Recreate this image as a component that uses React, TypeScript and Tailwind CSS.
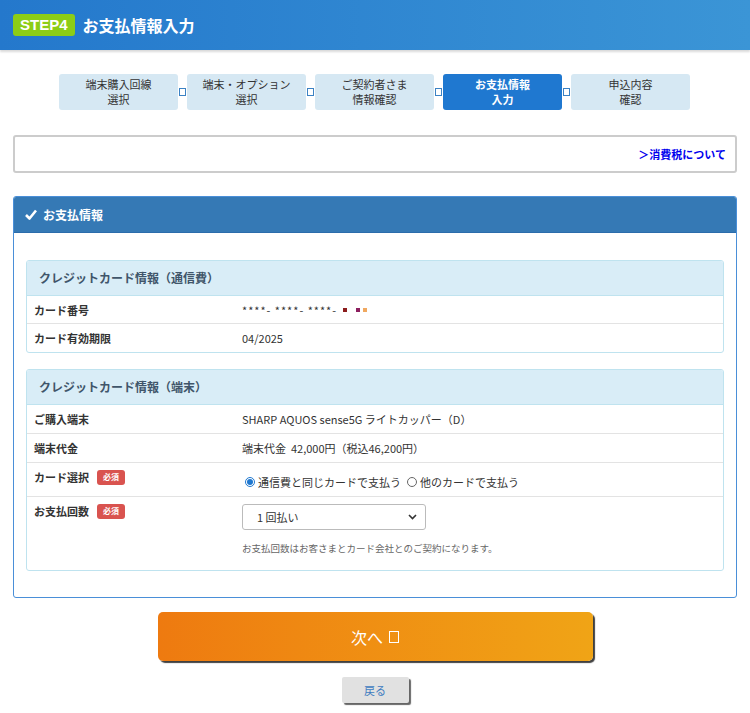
const font = { fontFamily: '"Noto Sans CJK JP", "Liberation Sans", sans-serif' };

const Tofu = ({ className = '' }: { className?: string }) => (
  <span className={`inline-block w-[7px] h-[8px] border border-[#3b82c4] ${className}`} />
);

const steps = [
  { label: ['端末購入回線', '選択'] },
  { label: ['端末・オプション', '選択'] },
  { label: ['ご契約者さま', '情報確認'] },
  { label: ['お支払情報', '入力'], active: true },
  { label: ['申込内容', '確認'] },
];

const Required = () => (
  <span className="ml-2 inline-flex items-center rounded-[3px] bg-[#d9534f] px-[6px] h-[15px] text-[8px] font-bold text-white">
    必須
  </span>
);

interface RowProps {
  label: React.ReactNode;
  children: React.ReactNode;
  h?: string;
  last?: boolean;
}

const Row = ({ label, children, h = 'h-[28px]', last }: RowProps) => (
  <div className={`flex ${h} ${last ? '' : 'border-b border-[#e3e3e3]'}`}>
    <div className="w-[215px] pl-[7px] text-[11px] font-bold text-[#333] flex items-start pt-[6px]">{label}</div>
    <div className="flex-1 text-[11px] text-[#333] pt-[6px]">{children}</div>
  </div>
);

const Section = ({ title, children }: { title: string; children: React.ReactNode }) => (
  <div className="rounded-[3px] border border-[#bfe3ef] overflow-hidden">
    <div className="h-[35px] bg-[#d9edf7] border-b border-[#bfe3ef] flex items-center pl-[12px] text-[12px] font-bold text-[#40556a]">
      {title}
    </div>
    {children}
  </div>
);

export default function App() {
  return (
    <div className="w-[750px] min-h-[713px] bg-white" style={font}>
      <div className="h-[50px] bg-gradient-to-r from-[#2478cc] to-[#3b95d6] shadow-[0_2px_2px_rgba(0,0,0,0.15)] flex items-center pl-[13px]">
        <span className="h-[22px] px-[7px] rounded-[3px] bg-[#8ccd16] text-white text-[15px] font-bold flex items-center" style={{ fontFamily: '"Liberation Sans", sans-serif' }}>
          STEP4
        </span>
        <span className="ml-[8px] text-white text-[16px] font-bold">お支払情報入力</span>
      </div>

      <div className="mt-[24px] flex items-center justify-center pr-[1px]">
        {steps.map((s, i) => (
          <div key={i} className="flex items-center">
            <div
              className={`w-[119px] h-[36px] rounded-[3px] flex flex-col items-center justify-center text-[11px] ${
                s.active ? 'bg-[#1f78d0] text-white font-bold' : 'bg-[#d6e8f3] text-[#333]'
              }`}
            >
              <span className="leading-[15px]">{s.label[0]}</span>
              <span className="leading-[15px]">{s.label[1]}</span>
            </div>
            {i < steps.length - 1 && (
              <div className="w-[9px] flex justify-center">
                <Tofu />
              </div>
            )}
          </div>
        ))}
      </div>

      <div className="mx-[13px] mt-[25px] h-[38px] rounded-[3px] border-2 border-[#cccccc] flex items-center justify-end pr-[9px]">
        <span className="text-[11px] font-bold text-[#0000ee]">＞消費税について</span>
      </div>

      <div className="mx-[13px] mt-[23px] rounded-[3px] border border-[#4a8fd8] overflow-hidden">
        <div className="h-[36px] bg-[#3579b5] border-b border-[#2b6cab] flex items-center pl-[11px] text-white text-[12px] font-bold">
          <svg width="12" height="11" viewBox="0 0 12 11" className="mr-[6px]">
            <path d="M1 6 L4.5 9.5 L11 1.5" stroke="white" strokeWidth="2.6" fill="none" strokeLinejoin="round" />
          </svg>
          お支払情報
        </div>
        <div className="px-[12px] pt-[27px] pb-[26px] flex flex-col gap-[16px]">
          <Section title="クレジットカード情報（通信費）">
            <Row label="カード番号">
              <span className="inline-flex items-center gap-[3px] tracking-[1px]">
                ****- ****- ****-
                <span className="ml-[3px] inline-block w-[4px] h-[4px] bg-[#8b1c1c]" />
                <span className="ml-[6px] inline-block w-[4px] h-[4px] bg-[#8c1f5e]" />
                <span className="inline-block w-[4px] h-[4px] bg-[#f0a860]" />
              </span>
            </Row>
            <Row label="カード有効期限" last>
              04/2025
            </Row>
          </Section>

          <Section title="クレジットカード情報（端末）">
            <Row label="ご購入端末" h="h-[29px]">
              SHARP AQUOS sense5G ライトカッパー（D）
            </Row>
            <Row label="端末代金" h="h-[29px]">
              端末代金&nbsp;&nbsp;42,000円（税込46,200円）
            </Row>
            <Row
              h="h-[34px]"
              label={
                <span className="flex items-center">
                  カード選択
                  <Required />
                </span>
              }
            >
              <div className="flex items-center mt-[5px] ml-[3px] text-[11px]">
                <span className="w-[10px] h-[10px] rounded-full border border-[#1f78d0] flex items-center justify-center mr-[3px]">
                  <span className="w-[6px] h-[6px] rounded-full bg-[#1f78d0]" />
                </span>
                通信費と同じカードで支払う
                <span className="ml-[6px] w-[10px] h-[10px] rounded-full border border-[#666] mr-[3px]" />
                他のカードで支払う
              </div>
            </Row>
            <Row
              h="h-[73px]"
              last
              label={
                <span className="flex items-center">
                  お支払回数
                  <Required />
                </span>
              }
            >
              <div className="w-[184px] h-[26px] rounded-[3px] border border-[#bbb] flex items-center justify-between pl-[14px] pr-[8px] text-[11px] text-[#333] mt-[1px]">
                <span>1 回払い</span>
                <svg width="9" height="6" viewBox="0 0 9 6">
                  <path d="M1 1 L4.5 4.5 L8 1" stroke="#333" strokeWidth="1.6" fill="none" />
                </svg>
              </div>
              <div className="mt-[11px] text-[9.5px] text-[#666]">お支払回数はお客さまとカード会社とのご契約になります。</div>
            </Row>
          </Section>
        </div>
      </div>

      <div className="flex justify-center mt-[14px]">
        <button className="w-[435px] h-[49px] rounded-[5px] bg-gradient-to-r from-[#ee7a10] to-[#f0a416] shadow-[2px_2px_1px_rgba(0,0,0,0.75)] text-white text-[16px] flex items-center justify-center gap-[6px]">
          次へ
          <span className="inline-block w-[10px] h-[12px] border border-white" />
        </button>
      </div>

      <div className="flex justify-center mt-[16px]">
        <button className="w-[67px] h-[26px] rounded-[2px] bg-[#e1e1e1] shadow-[2px_2px_1px_rgba(0,0,0,0.6)] text-[11px] text-[#3f7cc0]">
          戻る
        </button>
      </div>
    </div>
  );
}
